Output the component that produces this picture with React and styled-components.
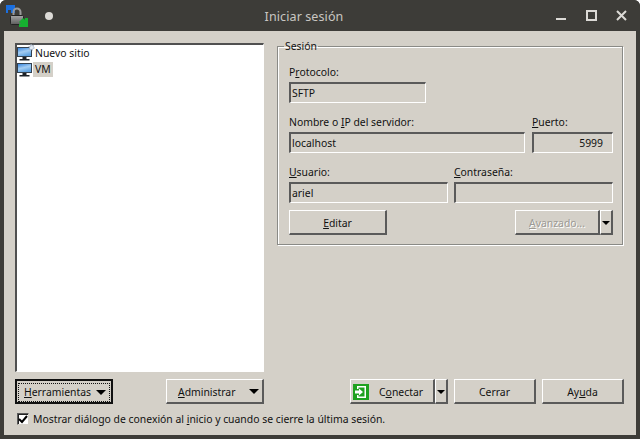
import React from 'react';
import styled, { createGlobalStyle } from 'styled-components';

const GlobalStyle = createGlobalStyle`
  html, body { margin: 0; padding: 0; background: #fff; }
  * { box-sizing: border-box; }
`;

const Monitor = ({ star }) => (
  <TreeIcon width="16" height="16" viewBox="0 0 16 16">
    <defs>
      <linearGradient id={star ? 'scrA' : 'scrB'} x1="0" y1="0" x2="0.4" y2="1">
        <stop offset="0" stopColor="#2a7ddc" />
        <stop offset="0.55" stopColor="#a4cdf2" />
        <stop offset="1" stopColor="#5fa3e2" />
      </linearGradient>
    </defs>
    <rect x="0.5" y="2.5" width="14" height="9" fill={`url(#${star ? 'scrA' : 'scrB'})`} stroke="#33414f" />
    <rect x="5.5" y="12" width="4" height="2" fill="#1d2228" />
    <rect x="2.5" y="14" width="10" height="1.5" fill="#1d2228" />
    {star && <path d="M14 -1 l.8 1.6 1.8 -.5 -.4 1.8 1.3 1 -1.7 .8 -.4 1.8 -1.4 -1.2 -1.8 .4 .5 -1.8 -1.1 -1.3 1.8 -.1z" fill="#e4ecf5" stroke="#93a5ba" strokeWidth=".6" />}
  </TreeIcon>
);

const AppIcon = () => (
  <svg width="24" height="24" viewBox="0 0 24 24">
    <defs>
      <linearGradient id="lockBody" x1="0" y1="0" x2="0" y2="1">
        <stop offset="0" stopColor="#a6a6a6" />
        <stop offset="1" stopColor="#5c5c5c" />
      </linearGradient>
    </defs>
    <path d="M1 1 H10 V9 H6 V6 H3 V9 H1z" fill="#1a6fe0" />
    <path d="M8.5 11 V8 a3.5 3.5 0 0 1 7 0 V11" fill="none" stroke="#9a9a9a" strokeWidth="2" />
    <rect x="5.5" y="11.5" width="13" height="9" rx="1" fill="url(#lockBody)" stroke="#222" />
    <path d="M14 18 L18 14 L20 16 L20 14 H23 V23 H14 V20 H16z" fill="#16b030" />
  </svg>
);

const ConnectIcon = () => (
  <svg width="16" height="16" viewBox="0 0 16 16">
    <rect width="16" height="16" fill="#1fa11f" />
    <path d="M4 2 H13 V14 H4 V11 H5.5 V12.5 H11.5 V3.5 H5.5 V5 H4z" fill="#fff" />
    <path d="M2 6.5 H6 V4.5 L10 8 6 11.5 V9.5 H2z" fill="#fff" />
  </svg>
);

const Arrow = ({ wide }) => <ArrowShape $wide={wide} />;

export default function App() {
  return (
    <>
      <GlobalStyle />
      <Win>
        <TitleBar>
          <TitleLeft>
            <AppIcon />
            <Dot />
          </TitleLeft>
          <Title>Iniciar sesión</Title>
          <WinControls>
            <svg width="11" height="11" viewBox="0 0 11 11"><rect x="0" y="8" width="10" height="2" fill="#dcdad6" /></svg>
            <svg width="11" height="11" viewBox="0 0 11 11"><rect x="1" y="1" width="9" height="9" fill="none" stroke="#dcdad6" strokeWidth="2" /></svg>
            <svg width="11" height="11" viewBox="0 0 11 11"><path d="M1 1 L10 10 M10 1 L1 10" stroke="#dcdad6" strokeWidth="2" /></svg>
          </WinControls>
        </TitleBar>
        <Body>
          <MainRow>
            <Tree>
              <TreeRow><Monitor star /><TreeLabel>Nuevo sitio</TreeLabel></TreeRow>
              <TreeRow><Monitor /><TreeLabel $selected>VM</TreeLabel></TreeRow>
            </Tree>
            <Group>
              <Legend>Sesión</Legend>
              <Field $width="137px">
                <Label>P<U>r</U>otocolo:</Label>
                <Input>SFTP</Input>
              </Field>
              <FieldRow>
                <Field $width="236px">
                  <Label>Nombre o <U>I</U>P del servidor:</Label>
                  <Input>localhost</Input>
                </Field>
                <Field $width="81px">
                  <Label><U>P</U>uerto:</Label>
                  <Input $right>5999</Input>
                </Field>
              </FieldRow>
              <FieldRow>
                <Field $width="159px">
                  <Label><U>U</U>suario:</Label>
                  <Input>ariel</Input>
                </Field>
                <Field $width="159px">
                  <Label><U>C</U>ontraseña:</Label>
                  <Input />
                </Field>
              </FieldRow>
              <ActionRow>
                <Button $width="98px"><U>E</U>ditar</Button>
                <Split>
                  <Button $width="85px" $disabled><U>A</U>vanzado...</Button>
                  <Button $width="13px"><Arrow /></Button>
                </Split>
              </ActionRow>
            </Group>
          </MainRow>
          <ButtonRow>
            <Side>
              <Button $width="98px" $focused>
                <FocusBox><span><U>H</U>erramientas</span><Arrow wide /></FocusBox>
              </Button>
              <Button $width="98px">
                <SpreadLabel><span><U>A</U>dministrar</span><Arrow wide /></SpreadLabel>
              </Button>
            </Side>
            <Side $gap="6px">
              <Split>
                <Button $width="85px">
                  <ConnectLabel><ConnectIcon /><span>C<U>o</U>nectar</span></ConnectLabel>
                </Button>
                <Button $width="13px"><Arrow /></Button>
              </Split>
              <Button $width="82px">Cerrar</Button>
              <Button $width="82px">Ay<U>u</U>da</Button>
            </Side>
          </ButtonRow>
          <CheckRow>
            <CheckBox>
              <svg width="10" height="10" viewBox="0 0 10 10"><path d="M1 5 L4 8 L9 2" fill="none" stroke="#000" strokeWidth="2" /></svg>
            </CheckBox>
            <span>Mostrar diálogo de conexión al <U>i</U>nicio y cuando se cierre la última sesión.</span>
          </CheckRow>
        </Body>
      </Win>
    </>
  );
}

const Win = styled.div`
  width: 640px;
  height: 439px;
  display: flex;
  flex-direction: column;
  background: #3d3c38;
  border-radius: 6px 6px 0 0;
  overflow: hidden;
  font-family: "Noto Sans", "DejaVu Sans", sans-serif;
  font-size: 10.4px;
  color: #111;
`;
const TitleBar = styled.div`
  height: 31px;
  flex: none;
  display: grid;
  grid-template-columns: 1fr auto 1fr;
  align-items: center;
  background: #3d3c38;
  padding: 0 13px 0 5px;
`;
const TitleLeft = styled.div`
  display: flex;
  align-items: center;
  gap: 16px;
  padding-top: 1px;
`;
const Dot = styled.span`
  width: 8px;
  height: 8px;
  border-radius: 50%;
  background: #dcdad6;
`;
const Title = styled.div`
  color: #c9c7c2;
  font-size: 12.5px;
  letter-spacing: 0.1px;
  margin-right: 24px;
  padding-top: 1px;
`;
const WinControls = styled.div`
  display: flex;
  justify-content: flex-end;
  align-items: center;
  gap: 19px;
`;
const Body = styled.div`
  flex: 1;
  display: flex;
  flex-direction: column;
  background: #d4d0c8;
  margin: 0 4px 4px 4px;
  padding: 12px 12px 0 11px;
`;
const MainRow = styled.div`
  display: flex;
  align-items: flex-start;
  gap: 13px;
  height: 329px;
`;
const Tree = styled.div`
  width: 249px;
  height: 329px;
  background: #fff;
  border-style: solid;
  border-width: 2px 1px 1px 2px;
  border-color: #505050 #fff #fff #505050;
  padding: 0;
`;
const TreeRow = styled.div`
  display: flex;
  align-items: center;
  height: 16px;
`;
const TreeIcon = styled.svg`
  flex: none;
  overflow: visible;
`;
const TreeLabel = styled.span`
  padding: 0 2px;
  height: 15px;
  line-height: 15px;
  background: ${(p) => (p.$selected ? '#d4d0c8' : 'transparent')};
`;
const Group = styled.fieldset`
  width: 346px;
  height: 205px;
  margin: -3px 0 0 0;
  padding: 12px 9px 0 11px;
  border: 1px solid #8a8a86;
  box-shadow: inset 1px 1px 0 #fff, 1px 1px 0 #fff;
`;
const Legend = styled.legend`
  margin-left: -5px;
  padding: 0 1px;
  line-height: 13px;
`;
const FieldRow = styled.div`
  display: flex;
  justify-content: space-between;
  margin-top: 12px;
`;
const Field = styled.div`
  width: ${(p) => p.$width};
  display: flex;
  flex-direction: column;
`;
const Label = styled.div`
  height: 14px;
  line-height: 14px;
  margin-bottom: 3px;
`;
const U = styled.span`
  text-decoration: underline;
`;
const Input = styled.div`
  height: 21px;
  line-height: 16px;
  padding: 1px 9px 0 1px;
  text-align: ${(p) => (p.$right ? 'right' : 'left')};
  border-style: solid;
  border-width: 2px 1px 1px 2px;
  border-color: #5a5a5a #fff #fff #5a5a5a;
`;
const ActionRow = styled.div`
  display: flex;
  justify-content: space-between;
  margin-top: 7px;
`;
const Split = styled.div`
  display: flex;
`;
const Button = styled.div`
  width: ${(p) => p.$width};
  height: 25px;
  flex: none;
  display: flex;
  align-items: center;
  justify-content: center;
  padding-top: 1px;
  border-style: solid;
  border-width: ${(p) => (p.$focused ? '2px' : '1px 2px 2px 1px')};
  border-color: ${(p) => (p.$focused ? '#111' : '#fff #5a5a5a #5a5a5a #fff')};
  color: ${(p) => (p.$disabled ? '#9c9a94' : 'inherit')};
  text-shadow: ${(p) => (p.$disabled ? '1px 1px 0 #fff' : 'none')};
`;
const FocusBox = styled.div`
  width: 90px;
  height: 17px;
  display: flex;
  align-items: center;
  justify-content: space-between;
  padding: 0 3px 0 5px;
  outline: 1px dotted #111;
`;
const SpreadLabel = styled.div`
  width: 100%;
  display: flex;
  align-items: center;
  justify-content: space-between;
  padding: 0 3px 0 11px;
`;
const ConnectLabel = styled.div`
  width: 100%;
  display: flex;
  align-items: center;
  gap: 10px;
  padding-left: 2px;
`;
const ArrowShape = styled.span`
  width: 0;
  height: 0;
  border-style: solid;
  border-width: ${(p) => (p.$wide ? '5px 5px 0 5px' : '4px 4px 0 4px')};
  border-color: #000 transparent transparent transparent;
`;
const ButtonRow = styled.div`
  display: flex;
  justify-content: space-between;
  margin-top: 7px;
`;
const Side = styled.div`
  display: flex;
  gap: ${(p) => p.$gap || '53px'};
  width: ${(p) => (p.$gap ? 'auto' : '249px')};
`;
const CheckRow = styled.div`
  display: flex;
  align-items: center;
  gap: 4px;
  margin: 8px 0 0 2px;
  height: 14px;
`;
const CheckBox = styled.span`
  width: 12px;
  height: 12px;
  display: flex;
  align-items: center;
  justify-content: center;
  background: #fff;
  border-style: solid;
  border-width: 1px;
  border-color: #5a5a5a #d4d0c8 #d4d0c8 #5a5a5a;
  box-shadow: inset 1px 1px 0 #222;
`;
